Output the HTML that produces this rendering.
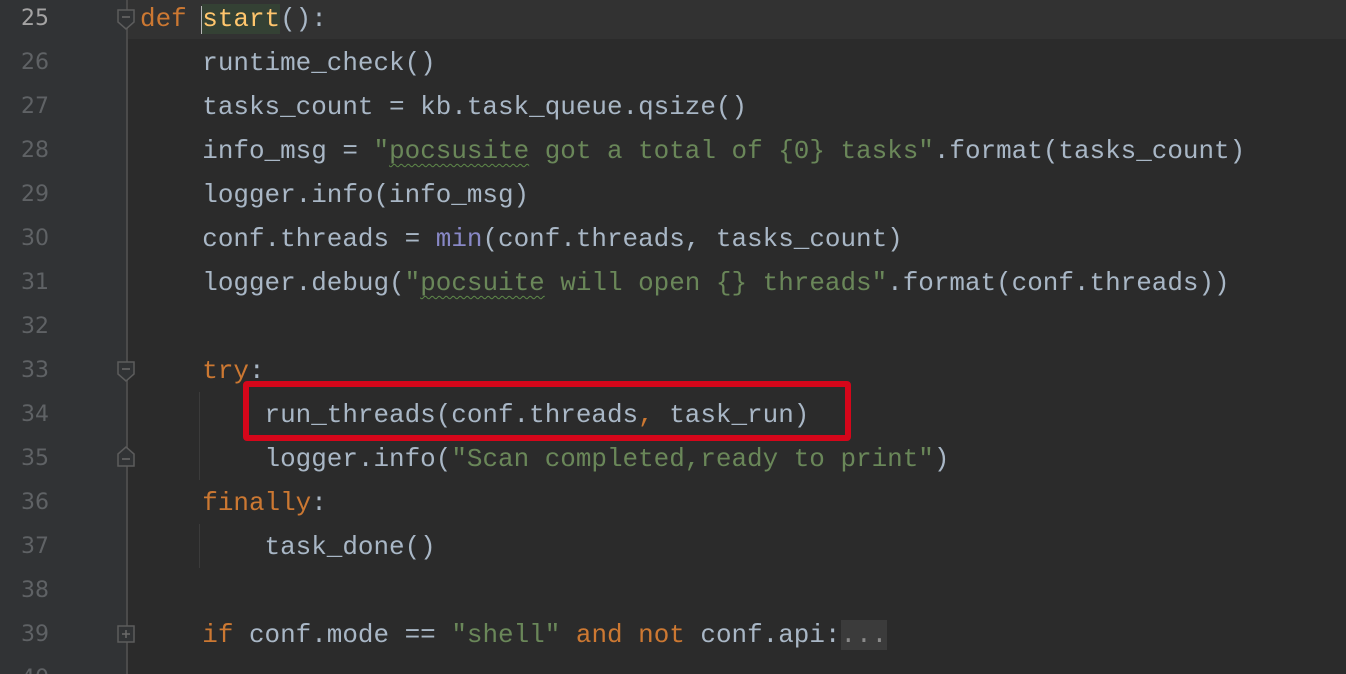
<!DOCTYPE html>
<html style="overflow:hidden;width:1346px;height:674px"><head><style>
body{margin:0;width:1346px;height:674px;overflow:hidden;background:#2b2b2b;position:relative;font-family:"Liberation Mono",monospace;}
#gut{position:absolute;left:0;top:0;width:127px;height:674px;background:#313335;}
#gl{position:absolute;left:126px;top:0;width:2px;height:674px;background:#4b4b4b;}
#cur{position:absolute;left:128px;top:0;width:1218px;height:39px;background:#323232;}
.n{position:absolute;left:0;width:49px;text-align:right;font-family:"DejaVu Sans",sans-serif;font-size:22px;color:#5f6265;line-height:44px;}
.l{position:absolute;left:140px;font-size:25.95px;line-height:44px;color:#a9b7c6;white-space:pre;}
.k{color:#cc7832}.s{color:#6a8759}.b{color:#8888c6}.f{color:#ffc66d;background:#344134}
.w{text-decoration:underline wavy #5f8a4a;text-decoration-thickness:1px;text-underline-offset:5px}
svg.fd{position:absolute;left:116px;width:20px;height:24px}
.ig{position:absolute;width:1px;background:#3b3b3b;left:199px}
</style></head><body>
<div id="gut"></div><div id="gl"></div><div id="cur"></div>
<div class="n" style="top:-3px;color:#a4a3a3">25</div>
<div class="n" style="top:41px">26</div>
<div class="n" style="top:85px">27</div>
<div class="n" style="top:129px">28</div>
<div class="n" style="top:173px">29</div>
<div class="n" style="top:217px">30</div>
<div class="n" style="top:261px">31</div>
<div class="n" style="top:305px">32</div>
<div class="n" style="top:349px">33</div>
<div class="n" style="top:393px">34</div>
<div class="n" style="top:437px">35</div>
<div class="n" style="top:481px">36</div>
<div class="n" style="top:525px">37</div>
<div class="n" style="top:569px">38</div>
<div class="n" style="top:613px">39</div>
<div class="n" style="top:657px">40</div>
<svg class="fd" style="top:8px" viewBox="0 0 20 24"><path d="M2 2H18V14L10 21L2 14Z" fill="#313335" stroke="#5c5c5c" stroke-width="1.5"/><path d="M6 9H14" stroke="#6a6a6a" stroke-width="1.5"/></svg>
<svg class="fd" style="top:360px" viewBox="0 0 20 24"><path d="M2 2H18V14L10 21L2 14Z" fill="#313335" stroke="#5c5c5c" stroke-width="1.5"/><path d="M6 9H14" stroke="#6a6a6a" stroke-width="1.5"/></svg>
<svg class="fd" style="top:444px" viewBox="0 0 20 24"><path d="M2 22H18V10L10 3L2 10Z" fill="#313335" stroke="#5c5c5c" stroke-width="1.5"/><path d="M6 15H14" stroke="#6a6a6a" stroke-width="1.5"/></svg>
<svg class="fd" style="top:622px" viewBox="0 0 20 24"><rect x="2" y="4" width="16" height="16" fill="#313335" stroke="#5c5c5c" stroke-width="1.5"/><path d="M6 12H14M10 8V16" stroke="#6a6a6a" stroke-width="1.5"/></svg>
<div class="ig" style="top:392px;height:88px"></div>
<div class="ig" style="top:524px;height:44px"></div>
<div style="position:absolute;left:201px;top:6px;width:4px;height:28px;background:#b8b8b8"></div>
<div class="l" style="top:-3px"><span class="k">def</span> <span class="f">start</span>():</div>
<div class="l" style="top:41px">    runtime_check()</div>
<div class="l" style="top:85px">    tasks_count = kb.task_queue.qsize()</div>
<div class="l" style="top:129px">    info_msg = <span class="s">"<span class="w">pocsusite</span> got a total of {0} tasks"</span>.format(tasks_count)</div>
<div class="l" style="top:173px">    logger.info(info_msg)</div>
<div class="l" style="top:217px">    conf.threads = <span class="b">min</span>(conf.threads, tasks_count)</div>
<div class="l" style="top:261px">    logger.debug(<span class="s">"<span class="w">pocsuite</span> will open {} threads"</span>.format(conf.threads))</div>
<div class="l" style="top:349px">    <span class="k">try</span>:</div>
<div class="l" style="top:393px">        run_threads(conf.threads<span class="k">,</span> task_run)</div>
<div class="l" style="top:437px">        logger.info(<span class="s">"Scan completed,ready to print"</span>)</div>
<div class="l" style="top:481px">    <span class="k">finally</span>:</div>
<div class="l" style="top:525px">        task_done()</div>
<div class="l" style="top:613px">    <span class="k">if</span> conf.mode == <span class="s">"shell"</span> <span class="k">and not</span> conf.api:<span style="background:#3b3b3b;color:#8a8a8a">...</span></div>
<div style="position:absolute;left:243px;top:381px;width:608px;height:60px;border:6px solid #d5061a;border-radius:4px;box-sizing:border-box"></div>
</body></html>
